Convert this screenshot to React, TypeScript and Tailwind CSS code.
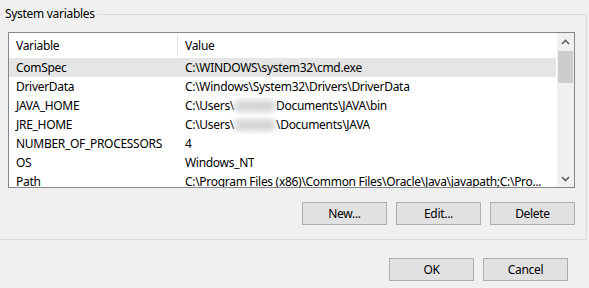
import React from 'react';

const rows: { name: string; value: React.ReactNode }[] = [
  { name: 'ComSpec', value: 'C:\\WINDOWS\\system32\\cmd.exe' },
  { name: 'DriverData', value: 'C:\\Windows\\System32\\Drivers\\DriverData' },
  {
    name: 'JAVA_HOME',
    value: (
      <>
        C:\Users\<Blur />Documents\JAVA\bin
      </>
    ),
  },
  {
    name: 'JRE_HOME',
    value: (
      <>
        C:\Users\<Blur />\Documents\JAVA
      </>
    ),
  },
  { name: 'NUMBER_OF_PROCESSORS', value: '4' },
  { name: 'OS', value: 'Windows_NT' },
  { name: 'Path', value: 'C:\\Program Files (x86)\\Common Files\\Oracle\\Java\\javapath;C:\\Pro...' },
];

function Blur() {
  return <span className="inline-block w-[42px] h-[12px] align-middle bg-[#d4d4d4] blur-[3px] rounded-full" />;
}

function Chevron({ down }: { down?: boolean }) {
  return (
    <svg width="9" height="6" viewBox="0 0 9 6" className={down ? 'rotate-180' : ''}>
      <path d="M1 5 L4.5 1.5 L8 5" fill="none" stroke="#606060" strokeWidth="1.6" />
    </svg>
  );
}

function Btn({ children }: { children: React.ReactNode }) {
  return (
    <button className="w-[85px] h-[23px] bg-[#e1e1e1] border border-[#adadad] text-[12px] leading-none text-black">
      {children}
    </button>
  );
}

export default function App() {
  return (
    <div className="w-[589px] h-[288px] bg-[#f0f0f0] overflow-hidden text-black text-[12px] tracking-[-0.3px] font-['Noto_Sans',sans-serif]">
      <div className="relative mt-[14px] w-[587px] border-t border-r border-b border-[#dcdcdc] pt-[17px] pl-[8px] pb-[14px]">
        <span className="absolute left-[3px] top-[-9px] px-[2px] bg-[#f0f0f0] leading-[16px]">System variables</span>

        <div className="w-[567px] h-[156px] border border-[#828790] bg-white flex">
          <div className="flex-1 min-w-0 overflow-hidden">
            <div className="flex h-[25px] items-center">
              <div className="w-[168px] shrink-0 pl-[7px]">Variable</div>
              <div className="w-px h-[23px] shrink-0 bg-[#e5e5e5]" />
              <div className="pl-[7px]">Value</div>
            </div>
            {rows.map((r, i) => (
              <div key={r.name} className={`flex h-[19px] items-center mr-[1px] whitespace-nowrap ${i === 0 ? 'bg-[#e5e5e5]' : ''}`}>
                <div className="w-[169px] shrink-0 pl-[7px]">{r.name}</div>
                <div className="pl-[7px] min-w-0 overflow-hidden">{r.value}</div>
              </div>
            ))}
          </div>
          <div className="w-[17px] shrink-0 bg-[#f0f0f0] flex flex-col items-center">
            <div className="h-[17px] flex items-center justify-center">
              <Chevron />
            </div>
            <div className="mt-[1px] w-[15px] h-[32px] bg-[#cdcdcd]" />
            <div className="flex-1" />
            <div className="h-[17px] flex items-center justify-center">
              <Chevron down />
            </div>
          </div>
        </div>

        <div className="mt-[14px] w-[567px] flex justify-end gap-[9px]">
          <Btn>New...</Btn>
          <Btn>Edit...</Btn>
          <Btn>Delete</Btn>
        </div>
      </div>

      <div className="mt-[18px] pr-[21px] flex justify-end gap-[9px]">
        <Btn>OK</Btn>
        <Btn>Cancel</Btn>
      </div>
    </div>
  );
}
